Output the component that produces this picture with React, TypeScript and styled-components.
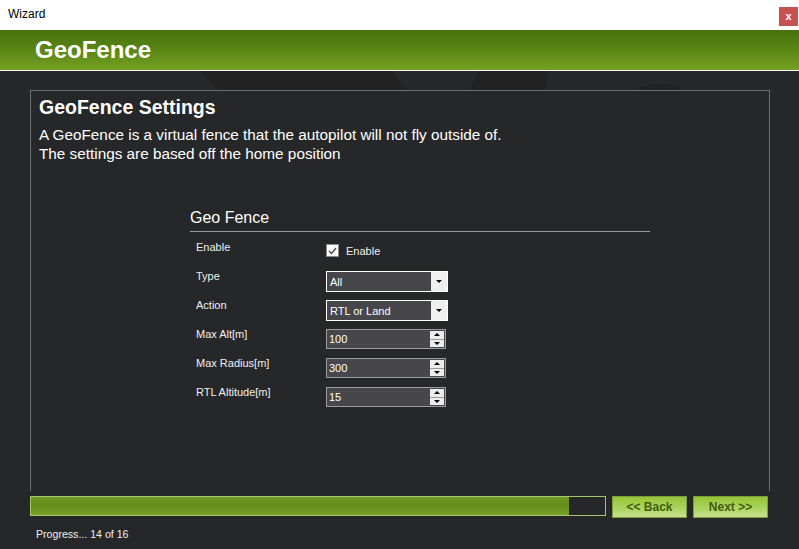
import * as React from 'react';
import styled, { createGlobalStyle } from 'styled-components';

const GlobalStyle = createGlobalStyle`
  html, body {
    margin: 0;
    padding: 0;
    background: #262729;
    font-family: "Liberation Sans", Arial, sans-serif;
    overflow: hidden;
  }
`;

const Window = styled.div`
  width: 799px;
  height: 549px;
  display: flex;
  flex-direction: column;
  background: #262729;
`;

const TitleBar = styled.div`
  height: 30px;
  flex: none;
  background: #ffffff;
  display: flex;
  justify-content: space-between;
  align-items: flex-start;
  padding-left: 8px;
`;

const TitleText = styled.span`
  margin-top: 7px;
  font-size: 12px;
  color: #000000;
`;

const CloseButton = styled.div`
  width: 19px;
  height: 19px;
  margin: 7px 1px 0 0;
  background: #c75050;
  color: #ffffff;
  font-size: 11px;
  font-weight: bold;
  display: flex;
  align-items: center;
  justify-content: center;
  line-height: 1;
`;

const Header = styled.div`
  height: 40px;
  flex: none;
  background: linear-gradient(to bottom, #46700c 0%, #5a8616 50%, #74a122 100%);
  border-bottom: 1px solid #ffffff;
  display: flex;
  align-items: center;
  padding-left: 35px;
  color: #ffffff;
  font-size: 24px;
  font-weight: bold;
`;

const Body = styled.div`
  position: relative;
  flex: 1;
  padding: 19px 0 0 30px;
`;

const Watermark = styled.svg`
  position: absolute;
  left: 0;
  top: 0;
  width: 799px;
  height: 30px;
`;

const Panel = styled.div`
  position: relative;
  box-sizing: border-box;
  width: 740px;
  height: 401px;
  border: 1px solid #6e6e6e;
  border-bottom: none;
  background: #262729;
  padding: 5px 0 0 8px;
  color: #ffffff;
`;

const PanelTitle = styled.div`
  font-size: 19.5px;
  font-weight: bold;
`;

const Description = styled.div`
  margin-top: 6px;
  font-size: 15.3px;
  line-height: 19px;
`;

const Group = styled.div`
  margin: 46px 0 0 151px;
  width: 460px;
`;

const GroupTitle = styled.div`
  font-size: 16px;
  padding-bottom: 4px;
  border-bottom: 1px solid #9a9a9a;
`;

const FieldGrid = styled.div`
  display: grid;
  grid-template-columns: 130px 1fr;
  grid-auto-rows: 29px;
  margin-top: 8px;
  padding-left: 6px;
  font-size: 11px;
  color: #f0f0f0;
`;

const FieldLabel = styled.div`
  align-self: start;
  padding-top: 1px;
`;

const FieldCell = styled.div`
  display: flex;
  align-items: flex-start;
`;

const CheckRow = styled.label`
  display: flex;
  align-items: center;
  gap: 7px;
  margin-top: 4px;
  font-size: 11px;
`;

const CheckBox = styled.span`
  width: 11px;
  height: 11px;
  border: 1px solid #8a8a8a;
  background: #ffffff;
  display: flex;
  align-items: center;
  justify-content: center;
`;

const Combo = styled.div`
  margin-top: 2px;
  width: 120px;
  height: 19px;
  border: 1px solid #ffffff;
  background: #47474b;
  display: flex;
  align-items: stretch;
`;

const ComboText = styled.span`
  flex: 1;
  padding-left: 3px;
  display: flex;
  align-items: center;
  font-size: 11px;
  color: #ffffff;
`;

const ComboButton = styled.span`
  width: 16px;
  background: #efefef;
  display: flex;
  align-items: center;
  justify-content: center;
`;

const Arrow = styled.span<{ $up?: boolean }>`
  width: 0;
  height: 0;
  border-left: 3px solid transparent;
  border-right: 3px solid transparent;
  ${(p) => (p.$up ? 'border-bottom: 3px solid #000;' : 'border-top: 3px solid #000;')}
`;

const Spin = styled.div`
  margin-top: 2px;
  width: 118px;
  height: 18px;
  border: 1px solid #9c9c9c;
  background: #47474b;
  display: flex;
  align-items: stretch;
`;

const SpinText = styled.span`
  flex: 1;
  padding-left: 2px;
  display: flex;
  align-items: center;
  font-size: 11px;
  color: #ffffff;
`;

const SpinButtons = styled.span`
  width: 14px;
  margin: 1px 1px 1px 0;
  display: flex;
  flex-direction: column;
  gap: 1px;
  background: #9c9c9c;
`;

const SpinHalf = styled.span`
  flex: 1;
  background: #ececec;
  display: flex;
  align-items: center;
  justify-content: center;
`;

const Footer = styled.div`
  margin-top: 5px;
  display: flex;
  align-items: flex-start;
  gap: 6px;
`;

const ProgressTrack = styled.div`
  width: 574px;
  height: 18px;
  border: 1px solid #a3c66b;
  background: #262729;
`;

const ProgressFill = styled.div`
  height: 100%;
  background: linear-gradient(to bottom, #6f9a24 0%, #648c1c 45%, #77a22a 100%);
`;

const NavButton = styled.div`
  width: 73px;
  height: 20px;
  border: 1px solid #7d9a3e;
  background: linear-gradient(to bottom, #94c536 0%, #a9d25a 50%, #c6e28e 100%);
  display: flex;
  align-items: center;
  justify-content: center;
  font-size: 12px;
  font-weight: bold;
  color: #435c0c;
`;

const ProgressText = styled.div`
  margin: 10px 0 0 6px;
  font-size: 10.6px;
  color: #f0f0f0;
`;

const fields = [
  { label: 'Max Alt[m]', value: '100' },
  { label: 'Max Radius[m]', value: '300' },
  { label: 'RTL Altitude[m]', value: '15' },
];

const ComboBox = ({ value }: { value: string }) => (
  <Combo>
    <ComboText>{value}</ComboText>
    <ComboButton>
      <Arrow />
    </ComboButton>
  </Combo>
);

const NumberBox = ({ value }: { value: string }) => (
  <Spin>
    <SpinText>{value}</SpinText>
    <SpinButtons>
      <SpinHalf><Arrow $up /></SpinHalf>
      <SpinHalf><Arrow /></SpinHalf>
    </SpinButtons>
  </Spin>
);

export default function App() {
  const step = 15;
  const total = 16;
  return (
    <>
      <GlobalStyle />
      <Window>
        <TitleBar>
          <TitleText>Wizard</TitleText>
          <CloseButton>x</CloseButton>
        </TitleBar>
        <Header>GeoFence</Header>
        <Body>
          {/* faint backdrop shapes peeking above the panel */}
          <Watermark viewBox="0 0 799 30">
            <polygon points="200,0 392,0 414,30 228,30" fill="#222223" />
            <polygon points="478,0 548,0 544,30 466,30" fill="#222223" />
            <path d="M620 30 C630 14 660 10 680 16 L682 30 Z" fill="#222223" />
          </Watermark>
          <Panel>
            <PanelTitle>GeoFence Settings</PanelTitle>
            <Description>
              A GeoFence is a virtual fence that the autopilot will not fly outside of.
              <br />
              The settings are based off the home position
            </Description>
            <Group>
              <GroupTitle>Geo Fence</GroupTitle>
              <FieldGrid>
                <FieldLabel>Enable</FieldLabel>
                <FieldCell>
                  <CheckRow>
                    <CheckBox>
                      <svg width="9" height="8" viewBox="0 0 9 8">
                        <path d="M1 4 L3.5 6.5 L8 1" stroke="#4a4a4a" strokeWidth="1.4" fill="none" />
                      </svg>
                    </CheckBox>
                    Enable
                  </CheckRow>
                </FieldCell>
                <FieldLabel>Type</FieldLabel>
                <FieldCell>
                  <ComboBox value="All" />
                </FieldCell>
                <FieldLabel>Action</FieldLabel>
                <FieldCell>
                  <ComboBox value="RTL or Land" />
                </FieldCell>
                {fields.map((f) => (
                  <React.Fragment key={f.label}>
                    <FieldLabel>{f.label}</FieldLabel>
                    <FieldCell>
                      <NumberBox value={f.value} />
                    </FieldCell>
                  </React.Fragment>
                ))}
              </FieldGrid>
            </Group>
          </Panel>
          <Footer>
            <ProgressTrack>
              <ProgressFill style={{ width: `${(step / total) * 100}%` }} />
            </ProgressTrack>
            <NavButton>&lt;&lt; Back</NavButton>
            <NavButton>Next &gt;&gt;</NavButton>
          </Footer>
          <ProgressText>Progress... 14 of 16</ProgressText>
        </Body>
      </Window>
    </>
  );
}
